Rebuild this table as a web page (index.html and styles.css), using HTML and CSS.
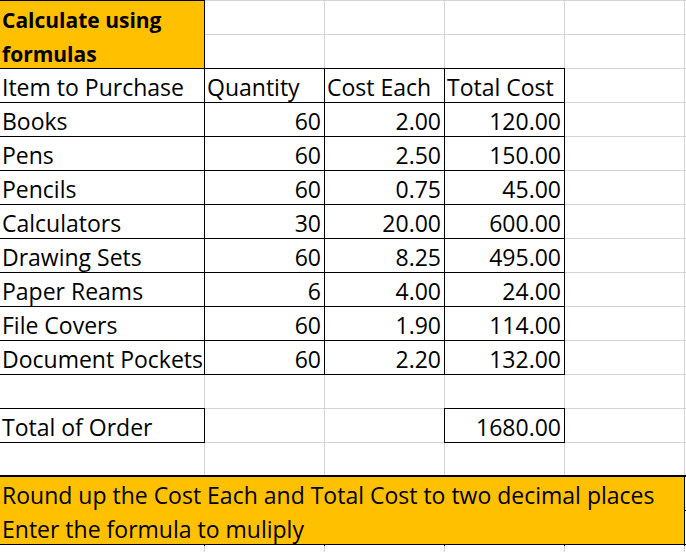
FILE: index.html
```html
<!DOCTYPE html>
<html>
<head>
<meta charset="utf-8">
<link rel="stylesheet" href="styles.css">
</head>
<body>
<div class="sheet">
  <div class="title">Calculate using formulas</div>
  <div></div><div></div><div></div><div></div><div></div>
  <div></div><div></div><div></div><div></div><div></div>

  <div class="bx">Item to Purchase</div><div class="bx">Quantity</div><div class="bx">Cost Each</div><div class="bx">Total Cost</div><div></div><div></div>
  <div class="bx">Books</div><div class="bx n">60</div><div class="bx n">2.00</div><div class="bx n">120.00</div><div></div><div></div>
  <div class="bx">Pens</div><div class="bx n">60</div><div class="bx n">2.50</div><div class="bx n">150.00</div><div></div><div></div>
  <div class="bx">Pencils</div><div class="bx n">60</div><div class="bx n">0.75</div><div class="bx n">45.00</div><div></div><div></div>
  <div class="bx">Calculators</div><div class="bx n">30</div><div class="bx n">20.00</div><div class="bx n">600.00</div><div></div><div></div>
  <div class="bx">Drawing Sets</div><div class="bx n">60</div><div class="bx n">8.25</div><div class="bx n">495.00</div><div></div><div></div>
  <div class="bx">Paper Reams</div><div class="bx n">6</div><div class="bx n">4.00</div><div class="bx n">24.00</div><div></div><div></div>
  <div class="bx">File Covers</div><div class="bx n">60</div><div class="bx n">1.90</div><div class="bx n">114.00</div><div></div><div></div>
  <div class="bx">Document Pockets</div><div class="bx n">60</div><div class="bx n">2.20</div><div class="bx n">132.00</div><div></div><div></div>

  <div></div><div></div><div></div><div></div><div></div><div></div>
  <div class="bx">Total of Order</div><div></div><div></div><div class="bx n">1680.00</div><div></div><div></div>
  <div></div><div></div><div></div><div></div><div></div><div></div>

  <div class="note"><span>Round up the Cost Each and Total Cost to two decimal places</span><span>Enter the formula to muliply</span></div>
  <div></div><div></div>
  <div></div><div></div><div></div><div></div><div></div><div></div>
</div>
</body>
</html>
```
FILE: styles.css
```css
html, body {
  margin: 0;
  padding: 0;
  background: #fff;
  overflow: hidden;
}

body {
  font-family: "Open Sans", "Liberation Sans", sans-serif;
  font-size: 23px;
  color: #000;
}

.sheet {
  display: grid;
  grid-template-columns: 204px 119px 119px 119px 119px 1fr;
  grid-template-rows: repeat(17, 33px);
  gap: 1px;
  padding-top: 1px;
  background: #d4d4d4;
}

.sheet > div {
  background: #fff;
  line-height: 36px;
  padding: 0 3px 0 2px;
  white-space: nowrap;
  overflow: visible;
}

.sheet > .n {
  text-align: right;
}

.sheet > .bx {
  outline: 1px solid #000;
}

.sheet > .title {
  grid-row: span 2;
  background: #ffc000;
  font-weight: bold;
  font-size: 21px;
  white-space: normal;
  line-height: 34px;
  padding-top: 2px;
  outline: 1px solid #000;
}

.sheet > .note {
  grid-column: 1 / 6;
  grid-row: span 2;
  background: #ffc000;
  outline: 2px solid #000;
  display: flex;
  flex-direction: column;
  line-height: 34px;
  padding-top: 1px;
}

.note span {
  line-height: 34px;
}
```
